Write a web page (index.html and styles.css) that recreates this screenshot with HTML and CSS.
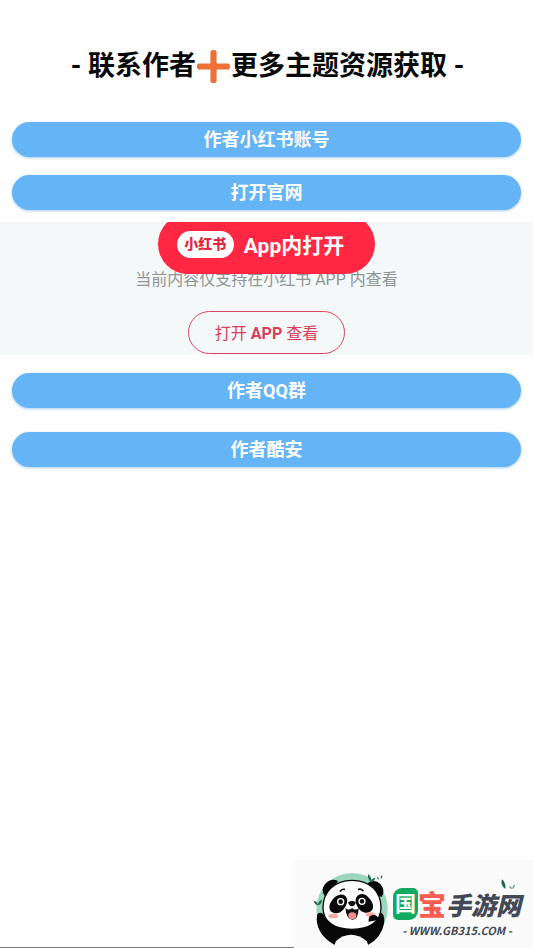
FILE: index.html
```html
<!DOCTYPE html>
<html lang="zh-CN">
<head>
<meta charset="utf-8">
<meta name="viewport" content="width=device-width, initial-scale=1">
<title>联系作者</title>
<link rel="stylesheet" href="styles.css">
</head>
<body>
<main class="page">
  <h1 class="title">
    <span>- 联系作者</span>
    <svg class="plus" viewBox="0 0 32 32" aria-hidden="true"><path d="M13 2q0-2 3-2t3 2v11h11q2 0 2 3t-2 3H19v11q0 2-3 2t-3-2V19H2q-2 0-2-3t2-3h11z" fill="#ec7038"/></svg>
    <span>更多主题资源获取 -</span>
  </h1>
  <div class="group group-top">
    <button class="bar" type="button">作者小红书账号</button>
    <button class="bar" type="button">打开官网</button>
  </div>
  <section class="embed">
    <button class="open-app" type="button"><span class="badge">小红书</span>App内打开</button>
    <p class="notice">当前内容仅支持在小红书 APP 内查看</p>
    <button class="view-app" type="button">打开 <b>APP</b> 查看</button>
  </section>
  <div class="group group-bottom">
    <button class="bar" type="button">作者QQ群</button>
    <button class="bar" type="button">作者酷安</button>
  </div>
</main>
<footer class="footer">
  <div class="brand">
    <svg class="panda" viewBox="60 30 240 264" aria-hidden="true">
      <circle cx="186" cy="176" r="107" fill="#9bd7bd"/>
      <path d="M92 190q-12 3-12 18 2 48 54 77l8-12q40-32 84 0l8 12q40-22 48-64 4-35-16-35l-20 14H110z" fill="#080808"/>
      <path d="M138 273q44-38 92 0l8 21H130z" fill="#fafafa"/>
      <path d="M104 138q-13-20 2-37 17-18 38-8l-16 28zM232 100q22-15 39 2 17 19 4 39l-22-8z" fill="#080808"/>
      <path d="M186 91c55 0 87 35 87 82 0 42-35 65-87 65s-87-23-87-65c0-47 34-82 87-82z" fill="#fff" stroke="#080808" stroke-width="4"/>
      <path d="M150 134c20-3 27 17 18 32-8 17-21 27-36 23-17-4-17-24-7-37 7-9 14-17 25-18zM217 132c-19 0-25 18-16 35 8 17 24 25 38 19 15-6 12-26 1-38-7-9-13-16-23-16z" fill="#080808"/>
      <circle cx="152" cy="155" r="9" fill="#111" stroke="#fff" stroke-width="4"/><circle cx="216" cy="154" r="9" fill="#111" stroke="#fff" stroke-width="4"/>
      <path d="M151 123q5-6 12-5M206 118q8-2 13 4" fill="none" stroke="#111" stroke-width="5" stroke-linecap="round"/>
      <path d="M174 157q12-8 24 0-4 12-12 12t-12-12z" fill="#111"/>
      <path d="M166 174q10 9 20 0 10 9 20 0-1 35-18 35-19 0-22-35z" fill="#111"/>
      <ellipse cx="187" cy="197" rx="12" ry="10" fill="#f48b8c"/>
      <ellipse cx="130" cy="198" rx="15" ry="7" fill="#f8aaa0"/><ellipse cx="242" cy="194" rx="14" ry="7" fill="#f8aaa0"/>
      <path d="M84 211q-8-22 6-23t14 28M236 215q-2-18 12-20t20 14" fill="#080808"/>
      <path d="M84 166q-10-2-13-14 12 2 13 14zM84 166q0-13 12-17-1 14-12 17zM242 96q-10-10-8-24 13 10 8 24zM242 97q2-12 14-14-3 12-14 14zM267 89q-6-2-7-9 7 2 7 9zM272 87q-1-8 4-13 3 8-4 13z" fill="#17694a"/>
    </svg>
    <div class="brand-text">
      <div class="brand-name"><span class="tile">国</span><span class="bao">宝</span><span class="rest">手游网</span>
        <svg class="leaves" viewBox="0 0 42 33" aria-hidden="true"><path d="M3 1q12 10 10 29Q-3 17 3 1z" fill="#17694a"/><path d="M33 31q-9-3-9-10 9 1 9 10zM34 30q-1-8 7-14 2 10-7 14z" fill="#6d9c8a"/></svg>
      </div>
      <div class="brand-url">- WWW.GB315.COM -</div>
    </div>
  </div>
</footer>
</body>
</html>
```
FILE: styles.css
```css
* { box-sizing: border-box; }
body {
  margin: 0;
  min-height: 100vh;
  display: flex;
  flex-direction: column;
  background: #fefefe;
  color: #080808;
  font-family: Roboto, "Noto Sans CJK SC", sans-serif;
}
button { font-family: inherit; cursor: pointer; }
.page { flex: 1; }
.title {
  display: flex;
  justify-content: center;
  align-items: center;
  gap: 1px;
  margin: 0;
  padding: 46px 0 36px 2px;
  font-size: 27px;
  line-height: 40px;
  font-weight: 700;
}
.plus { width: 33px; height: 33px; }
.group { display: flex; flex-direction: column; padding: 0 12px; }
.group-top { gap: 18px; padding-bottom: 12px; }
.group-bottom { gap: 24px; padding-top: 18px; }
.bar {
  height: 35px;
  border: 0;
  padding: 0;
  border-radius: 18px;
  background: #64b4f6;
  box-shadow: 0 1px 3px #a8cdea;
  color: #fff;
  font-size: 18px;
  line-height: 36px;
  font-weight: 700;
}
.embed {
  display: flex;
  flex-direction: column;
  align-items: center;
  overflow: hidden;
  padding-bottom: 1px;
  background: #f5f8f9;
}
.open-app {
  position: relative;
  z-index: 1;
  display: flex;
  align-items: center;
  gap: 10px;
  height: 60px;
  margin-top: -8px;
  padding: 0 31px 0 19px;
  border: 0;
  border-radius: 30px;
  background: #ff2742;
  color: #fff;
  font-size: 21px;
  font-weight: 700;
}
.badge {
  width: 57px;
  height: 27px;
  border-radius: 14px;
  background: #fff;
  color: #e32843;
  font-size: 14px;
  line-height: 27px;
  font-weight: 900;
  text-align: center;
}
.notice {
  margin: -6px 0 0;
  color: #909495;
  font-size: 16px;
  line-height: 24px;
}
.view-app {
  height: 43px;
  margin-top: 19px;
  padding: 0 26px 2px;
  border: 1px solid #d84560;
  border-radius: 22px;
  background: transparent;
  color: #d83e5a;
  font-size: 16px;
}
.footer {
  display: flex;
  justify-content: flex-end;
  background: linear-gradient(#777, #777) bottom / 100% 1px no-repeat;
}
.brand {
  display: flex;
  gap: 3px;
  height: 88px;
  padding: 0 12px 0 16px;
  background: #fafafa;
}
.panda { width: 80px; height: 88px; }
.brand-text { padding-top: 26px; }
.brand-name {
  position: relative;
  display: flex;
  align-items: center;
  height: 35px;
  color: #424856;
  font-size: 25px;
  font-weight: 900;
  font-style: italic;
}
.tile {
  width: 25px;
  border-radius: 9px 5px 9px 5px;
  background: #13a961;
  color: #fff;
  font-size: 21px;
  font-style: normal;
  font-weight: 700;
  line-height: 32px;
  text-align: center;
}
.bao { color: #f65c50; font-size: 28px; font-style: normal; }
.leaves { position: absolute; top: -7px; right: 6px; width: 14px; height: 11px; }
.brand-url {
  color: #424856;
  font-family: "Noto Sans CJK SC", sans-serif;
  font-size: 11px;
  line-height: 18px;
  font-weight: 700;
  font-style: italic;
  text-align: center;
}
```
